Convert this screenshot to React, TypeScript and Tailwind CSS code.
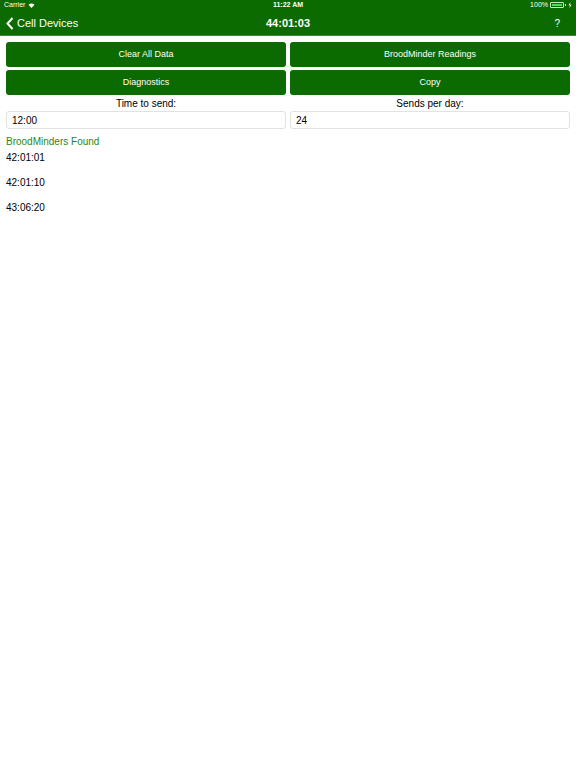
import React from "react";

const font = { fontFamily: '"Helvetica Neue", "Liberation Sans", Arial, sans-serif' };

function Battery() {
  return (
    <span className="flex items-center gap-[1px]">
      <span className="flex h-[6px] w-[14px] items-center rounded-[1px] border border-white/80 p-[1px]">
        <span className="h-full w-full bg-[#4cd964]" />
      </span>
      <span className="h-[2px] w-[1px] bg-white/80" />
      <svg width="4" height="6" viewBox="0 0 4 6" className="ml-[1px]">
        <path d="M2.5 0 L0.5 3.3 H2 L1.5 6 L3.5 2.7 H2 Z" fill="white" />
      </svg>
    </span>
  );
}

export default function App() {
  const buttons = ["Clear All Data", "BroodMinder Readings", "Diagnostics", "Copy"];
  const found = ["42:01:01", "42:01:10", "43:06:20"];

  return (
    <div className="min-h-[768px] w-[576px] bg-white" style={font}>
      <header className="border-b border-[#3d8a33] bg-[#0c6b00] text-white">
        <div className="relative flex h-[10px] items-center justify-between px-[4px] text-[7px]">
          <span className="flex items-center gap-[3px]">
            Carrier
            <svg width="7" height="5" viewBox="0 0 14 10">
              <path d="M7 10 L1 3.5 A9 9 0 0 1 13 3.5 Z" fill="white" />
            </svg>
          </span>
          <span className="absolute left-1/2 -translate-x-1/2 font-semibold">11:22 AM</span>
          <span className="flex items-center gap-[2px]">
            100%
            <Battery />
          </span>
        </div>
        <div className="relative flex h-[25px] items-center justify-between px-[6px] pt-[2px]">
          <span className="flex items-center gap-[3px] text-[11px]">
            <svg width="8" height="13" viewBox="0 0 8 13">
              <path d="M6.5 1 L1.5 6.5 L6.5 12" stroke="white" strokeWidth="2" fill="none" />
            </svg>
            Cell Devices
          </span>
          <span className="absolute left-1/2 top-[2px] flex h-[23px] -translate-x-1/2 items-center text-[11px] font-semibold">
            44:01:03
          </span>
          <span className="mr-[10px] text-[10px]">?</span>
        </div>
      </header>

      <div className="grid grid-cols-2 gap-x-[4px] gap-y-[3px] px-[6px] pt-[6px]">
        {buttons.map((b) => (
          <button
            key={b}
            type="button"
            className="flex h-[25px] items-center justify-center rounded-[3px] bg-[#0c6b00] text-[9px] text-white"
          >
            {b}
          </button>
        ))}
      </div>

      <div className="grid grid-cols-2 gap-x-[4px] px-[6px] pt-[1px]">
        <div className="flex flex-col">
          <span className="h-[15px] text-center text-[10px] leading-[15px] text-black">Time to send:</span>
          <div className="flex h-[18px] items-center rounded-[3px] border border-[#e2e2e2] px-[5px] text-[10px] text-black">
            12:00
          </div>
        </div>
        <div className="flex flex-col">
          <span className="h-[15px] text-center text-[10px] leading-[15px] text-black">Sends per day:</span>
          <div className="flex h-[18px] items-center rounded-[3px] border border-[#e2e2e2] px-[5px] text-[10px] text-black">
            24
          </div>
        </div>
      </div>

      <div className="px-[6px] pt-[6px]">
        <div className="text-[10px] leading-[14px] text-[#1f8a12]">BroodMinders Found</div>
        <ul className="mt-[2px] flex flex-col">
          {found.map((f) => (
            <li key={f} className="h-[25px] text-[10px] leading-[14px] text-black">
              {f}
            </li>
          ))}
        </ul>
      </div>
    </div>
  );
}
